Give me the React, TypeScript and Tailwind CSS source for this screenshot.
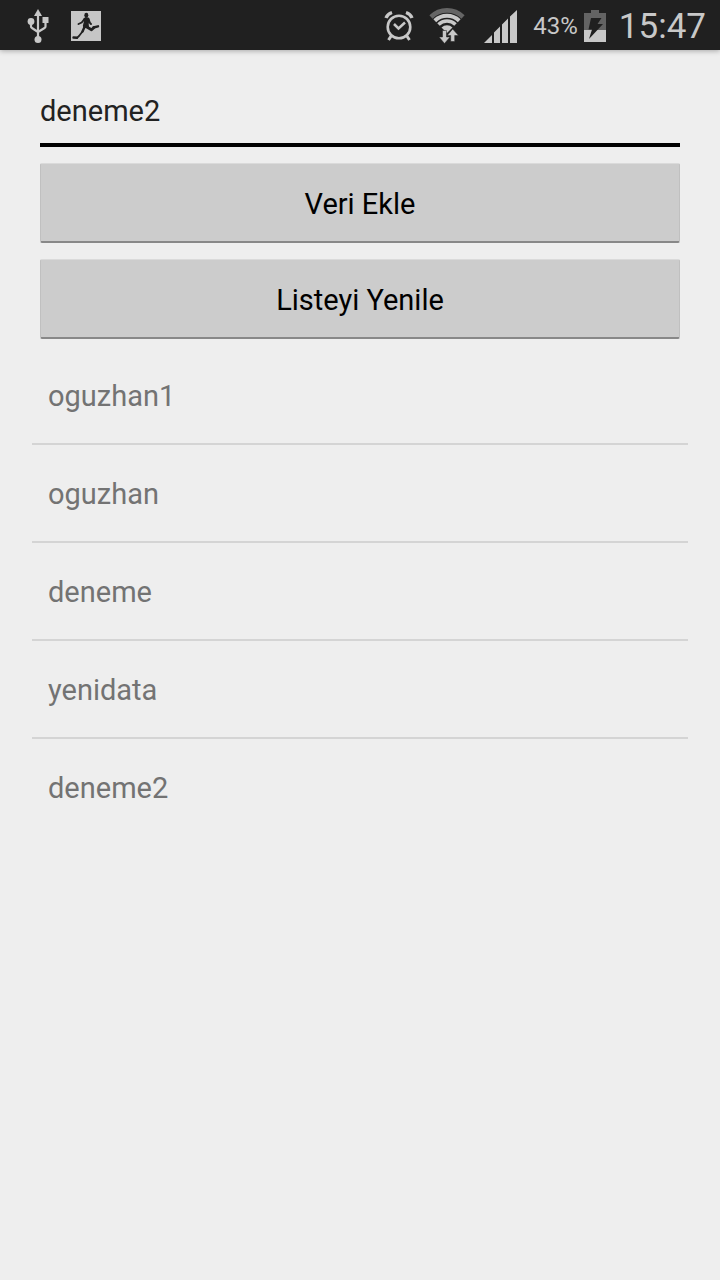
import { useState } from "react";

const items = ["oguzhan1", "oguzhan", "deneme", "yenidata", "deneme2"];

function UsbIcon() {
  return (
    <svg width="24" height="36" viewBox="0 0 24 36" fill="#c8c8c8" aria-hidden="true">
      <path d="M12 1l4 7H8z" />
      <circle cx="5" cy="13.500" r="3.400" />
      <rect x="16.500" y="9" width="6" height="6" />
      <circle cx="12" cy="31.500" r="3.500" />
      <path
        d="M12 6v24M5 14v4.500q0 1 1 1.500l6 4M19.500 14v4.500q0 1-1 1.500l-6.500 4"
        fill="none"
        stroke="#c8c8c8"
        strokeWidth="2.200"
      />
    </svg>
  );
}

function RunnerIcon() {
  return (
    <svg width="30" height="30" viewBox="0 0 30 30" aria-hidden="true">
      <rect width="30" height="30" fill="#c6c6c6" />
      <ellipse cx="15.300" cy="4.200" rx="2" ry="2.400" fill="#202020" />
      <path d="M12.500 7.500l2-1.500 3 .5 1 1.500-.8 5 .3 3-5 1.500-1.200-2.500 1-4z" fill="#202020" />
      <g fill="none" stroke="#202020" strokeLinecap="round" strokeLinejoin="round">
        <path d="M13.500 8l-2.800 3.500-3.200 1.500M17.500 8l1.500 4 1 1" strokeWidth="1.900" />
        <path d="M15 15.500l5.500 3.300 2.500-2.300" strokeWidth="2.800" />
        <path d="M22.500 16.500l4.500-1.200M13.500 16l-2 4.500" strokeWidth="2.400" />
        <path d="M11.500 20.500l-3.500 4.500-2 1.800" strokeWidth="1.800" />
        <path d="M6 26.800l-3.500-.3" strokeWidth="2.400" />
      </g>
    </svg>
  );
}

function AlarmIcon() {
  return (
    <svg width="30" height="32" viewBox="0 0 30 32" fill="none" stroke="#c8c8c8" aria-hidden="true">
      <circle cx="15" cy="17" r="11.300" strokeWidth="2.600" />
      <path d="M2 8q1.500-4 6-5.500M28 8q-1.500-4-6-5.500" strokeWidth="3.400" />
      <path d="M7.500 25.500L4.500 30M22.500 25.500l3 4.500" strokeWidth="3" />
      <path d="M10 14l4.500 4.500 6.500-6" strokeWidth="2.500" />
    </svg>
  );
}

function WifiIcon() {
  return (
    <svg width="36" height="36" viewBox="0 0 36 36" aria-hidden="true">
      <g fill="none" stroke="#c8c8c8" strokeWidth="4">
        <path d="M2 9A22.700 22.700 0 0 1 34 9" stroke="#656565" strokeWidth="4.600" />
        <path d="M5.800 12.800A17.500 17.500 0 0 1 30.200 12.800" />
        <path d="M9.500 16.500A12 12 0 0 1 26.500 16.500" strokeWidth="3.500" />
      </g>
      <path d="M12.500 19.500A7.800 7.800 0 0 1 23.500 19.500L18 25z" fill="#c8c8c8" />
      <path
        d="M13.500 22.500h4v6.500H21l-5.500 6.500L10 29h3.500zM21.700 33.500h4v-6H29.500L23.700 21l-5.500 6.500h3.500z"
        fill="#c8c8c8"
        stroke="#202020"
        strokeWidth=".5"
      />
    </svg>
  );
}

function SignalIcon() {
  return (
    <svg width="34" height="34" viewBox="0 0 34 34" fill="#c8c8c8" aria-hidden="true">
      <path d="M0 34l8-8v8zM10 34V23.500l6-6V34zM18 34V15.500l6-6V34zM26 34V7.500L33 1v33z" />
    </svg>
  );
}

function BatteryIcon() {
  return (
    <svg width="22" height="32" viewBox="0 0 22 32" aria-hidden="true">
      <path d="M7 0h8v3h7v17H0V3h7z" fill="#636363" />
      <rect y="20" width="22" height="12" fill="#c8c8c8" />
      <path d="M7 8h10.500L13.500 14h5.500L5 29l3-9.500H4.500z" fill="#202020" />
    </svg>
  );
}

function StatusBar() {
  return (
    <header className="flex h-[50px] items-center justify-between bg-[#202020] pt-[2px] pl-[26px] pr-[14px] text-[#c8c8c8] shadow-[0_1px_5px_#0000004d]">
      <div className="flex items-center gap-[21px]">
        <UsbIcon />
        <RunnerIcon />
      </div>
      <div className="flex items-center">
        <AlarmIcon />
        <div className="flex items-center gap-[19px] pl-[15px]">
          <WifiIcon />
          <SignalIcon />
        </div>
        <span className="pl-[15px] pr-[6px] text-[24px] leading-none">43%</span>
        <BatteryIcon />
        <span className="pl-[13px] text-[35px] leading-none">15:47</span>
      </div>
    </header>
  );
}

function Button({ children }: { children: string }) {
  return (
    <button
      type="button"
      className="h-20 w-full rounded-[2px] border border-b-2 border-[#c0c0c0] border-t-[#dadada] border-b-[#888888] bg-[#cccccc] pt-1 text-[29px] text-black"
    >
      {children}
    </button>
  );
}

export default function App() {
  const [value, setValue] = useState("deneme2");

  return (
    <div className="min-h-screen bg-[#eeeeee] font-[Roboto,sans-serif]">
      <StatusBar />
      <main className="px-8 pt-7">
        <div className="flex flex-col gap-4 px-2">
          <input
            type="text"
            aria-label="Veri"
            value={value}
            onChange={(e) => setValue(e.target.value)}
            className="w-full border-b-4 border-black bg-transparent pt-[10px] pb-[9px] text-[29px] leading-[46px] text-[#222222] outline-none"
          />
          <Button>Veri Ekle</Button>
          <Button>Listeyi Yenile</Button>
        </div>
        <ul className="mt-2 divide-y-2 divide-[#d4d4d4]">
          {items.map((item) => (
            <li key={item} className="px-4 pt-[25px] pb-[23px] text-[29px] leading-[48px] text-[#737373]">
              {item}
            </li>
          ))}
        </ul>
      </main>
    </div>
  );
}
